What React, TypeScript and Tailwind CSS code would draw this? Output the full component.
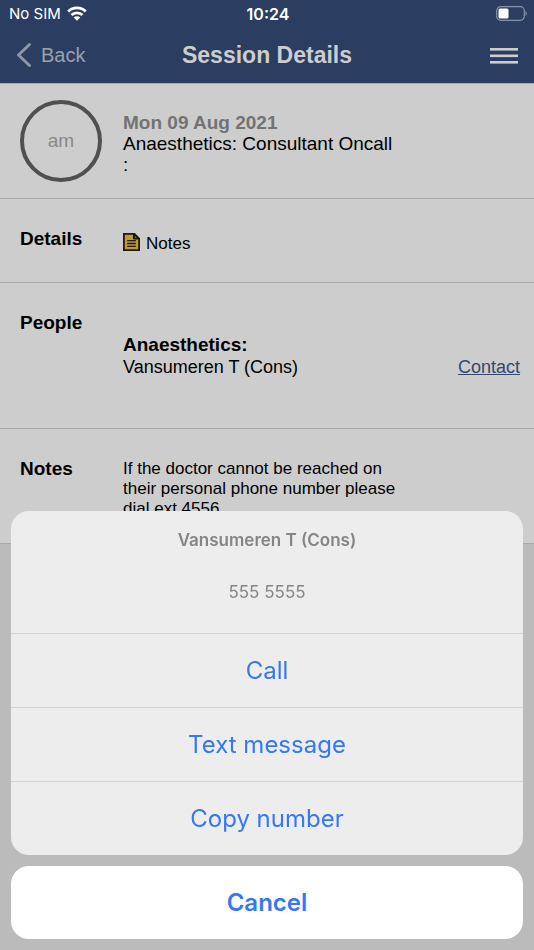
import type { ReactNode } from 'react';

const helvetica = "font-['Liberation_Sans',Arial,sans-serif]";
const inter = "font-['Inter',sans-serif]";

function StatusBar() {
  return (
    <div className={`grid h-[27px] grid-cols-3 items-center pr-[7px] pl-[9px] text-white ${inter}`}>
      <div className="flex items-center gap-[6px] text-[15px] leading-5">
        <span>No SIM</span>
        <svg width="20" height="15" viewBox="0 0 20 15" fill="none" stroke="currentColor" strokeWidth="2.8" aria-label="Wi-Fi">
          <path d="M1.2 5.6a12.4 12.4 0 0 1 17.6 0" />
          <path d="M4.5 9.1a7.8 7.8 0 0 1 11 0" />
          <path d="M10 14.8 6.7 11.5a4.7 4.7 0 0 1 6.6 0Z" fill="currentColor" stroke="none" />
        </svg>
      </div>
      <div className="text-center text-base leading-5 font-semibold">10:24</div>
      <svg className="justify-self-end" width="31" height="15" viewBox="0 0 31 15" fill="none" aria-label="Battery">
        <rect x="0.7" y="0.7" width="27.6" height="13.6" rx="4" stroke="#8793ab" strokeWidth="1.2" />
        <rect x="2.5" y="2.5" width="10" height="10" rx="1.5" fill="#fff" />
        <path d="M29.5 5c1.7.9 1.7 4.1 0 5Z" fill="#8793ab" />
      </svg>
    </div>
  );
}

function NavBar() {
  return (
    <div className="grid h-14 grid-cols-[1fr_auto_1fr] items-center px-4">
      <button type="button" className="flex items-center gap-[9px] text-xl text-[#9aa1ae]">
        <svg width="16" height="26" viewBox="0 0 16 26" fill="none" stroke="#8d97a8" strokeWidth="3" strokeLinecap="round" strokeLinejoin="round" aria-hidden="true">
          <path d="M13.5 2.5 2.5 13l11 10.5" />
        </svg>
        Back
      </button>
      <h1 className="text-[23px] leading-7 font-bold text-[#cdcdcd]">Session Details</h1>
      <button type="button" aria-label="Menu" className="justify-self-end text-[#cdcdcd]">
        <svg width="28" height="18" viewBox="0 0 28 18" fill="currentColor" aria-hidden="true">
          <rect y="2" width="28" height="2.6" />
          <rect y="8.5" width="28" height="2.6" />
          <rect y="15" width="28" height="2.6" />
        </svg>
      </button>
    </div>
  );
}

function Row({ title, className, children }: { title: string; className: string; children: ReactNode }) {
  return (
    <section className={`grid grid-cols-[103px_1fr] border-b border-[#a9a9a9] pt-[29px] pr-[14px] pl-5 ${className}`}>
      <h2 className="text-[19px] leading-[22px] font-bold">{title}</h2>
      {children}
    </section>
  );
}

function NotesIcon() {
  return (
    <svg width="17" height="18" viewBox="0 0 17 18" fill="none" stroke="#1c1a12" aria-hidden="true">
      <path d="M.9.9h10.6l4.6 4.6v11.6H.9Z" fill="#bd9b2c" strokeWidth="1.8" />
      <path d="M10.5.9V6h5.6L11.5.9Z" fill="#1c1a12" />
      <path d="M12 3.2v1.5h1.6Z" fill="#bd9b2c" stroke="none" />
      <path d="M4.2 7.6h8.6M4.2 10.5h8.6M4.2 13.4h8.6" strokeWidth="1.3" />
    </svg>
  );
}

const actions = ['Call', 'Text message', 'Copy number'];

function ActionSheet() {
  return (
    <div role="dialog" aria-label="Contact options" className={`fixed inset-x-[11px] bottom-[11px] flex flex-col gap-[11px] text-center ${inter}`}>
      <div className="overflow-hidden rounded-[18px] bg-[#ededed]">
        <div className="flex flex-col gap-8 pt-[19px] pb-[31px] text-[17px] leading-5 text-[#858585]">
          <p className="font-semibold">Vansumeren T (Cons)</p>
          <p>555 5555</p>
        </div>
        {actions.map((label) => (
          <button key={label} type="button" className="block h-[74px] w-full border-t border-[#d3d3d3] pt-px text-2xl text-[#3478f6]">
            {label}
          </button>
        ))}
      </div>
      <button type="button" className="h-[73px] rounded-[18px] bg-white pt-px text-2xl font-semibold text-[#3478f6]">
        Cancel
      </button>
    </div>
  );
}

export default function App() {
  return (
    <div className={`min-h-screen bg-[#bbbbbb] text-black ${helvetica}`}>
      <header className="bg-[#2b3d60]">
        <StatusBar />
        <NavBar />
      </header>
      <main className="bg-[#cdcdcd]">
        <section className="flex gap-[21px] border-y border-[#a9a9a9] py-4 pr-4 pl-5">
          <div className="flex size-[82px] shrink-0 items-center justify-center rounded-full border-4 border-[#505050] text-[19px] text-[#888888]">
            am
          </div>
          <div className="pt-3 text-[19px] leading-[21px]">
            <p className="font-bold text-[#737373]">Mon 09 Aug 2021</p>
            <p>Anaesthetics: Consultant Oncall</p>
            <p>:</p>
          </div>
        </section>
        <Row title="Details" className="h-[84px]">
          <p className="flex gap-[6px] self-start pt-[5px] text-[17px] leading-[22px]">
            <NotesIcon />
            Notes
          </p>
        </Row>
        <Row title="People" className="h-[146px]">
          <div className="pt-[22px] leading-[22px]">
            <h3 className="text-[19px] font-bold">Anaesthetics:</h3>
            <div className="flex justify-between text-lg leading-[22px]">
              <span>Vansumeren T (Cons)</span>
              <a href="#contact" className="text-[#36486f] underline">
                Contact
              </a>
            </div>
          </div>
        </Row>
        <Row title="Notes" className="h-[115px]">
          <p className="max-w-[290px] pt-px text-[17px] leading-5">
            If the doctor cannot be reached on their personal phone number please dial ext 4556.
          </p>
        </Row>
      </main>
      <ActionSheet />
    </div>
  );
}
